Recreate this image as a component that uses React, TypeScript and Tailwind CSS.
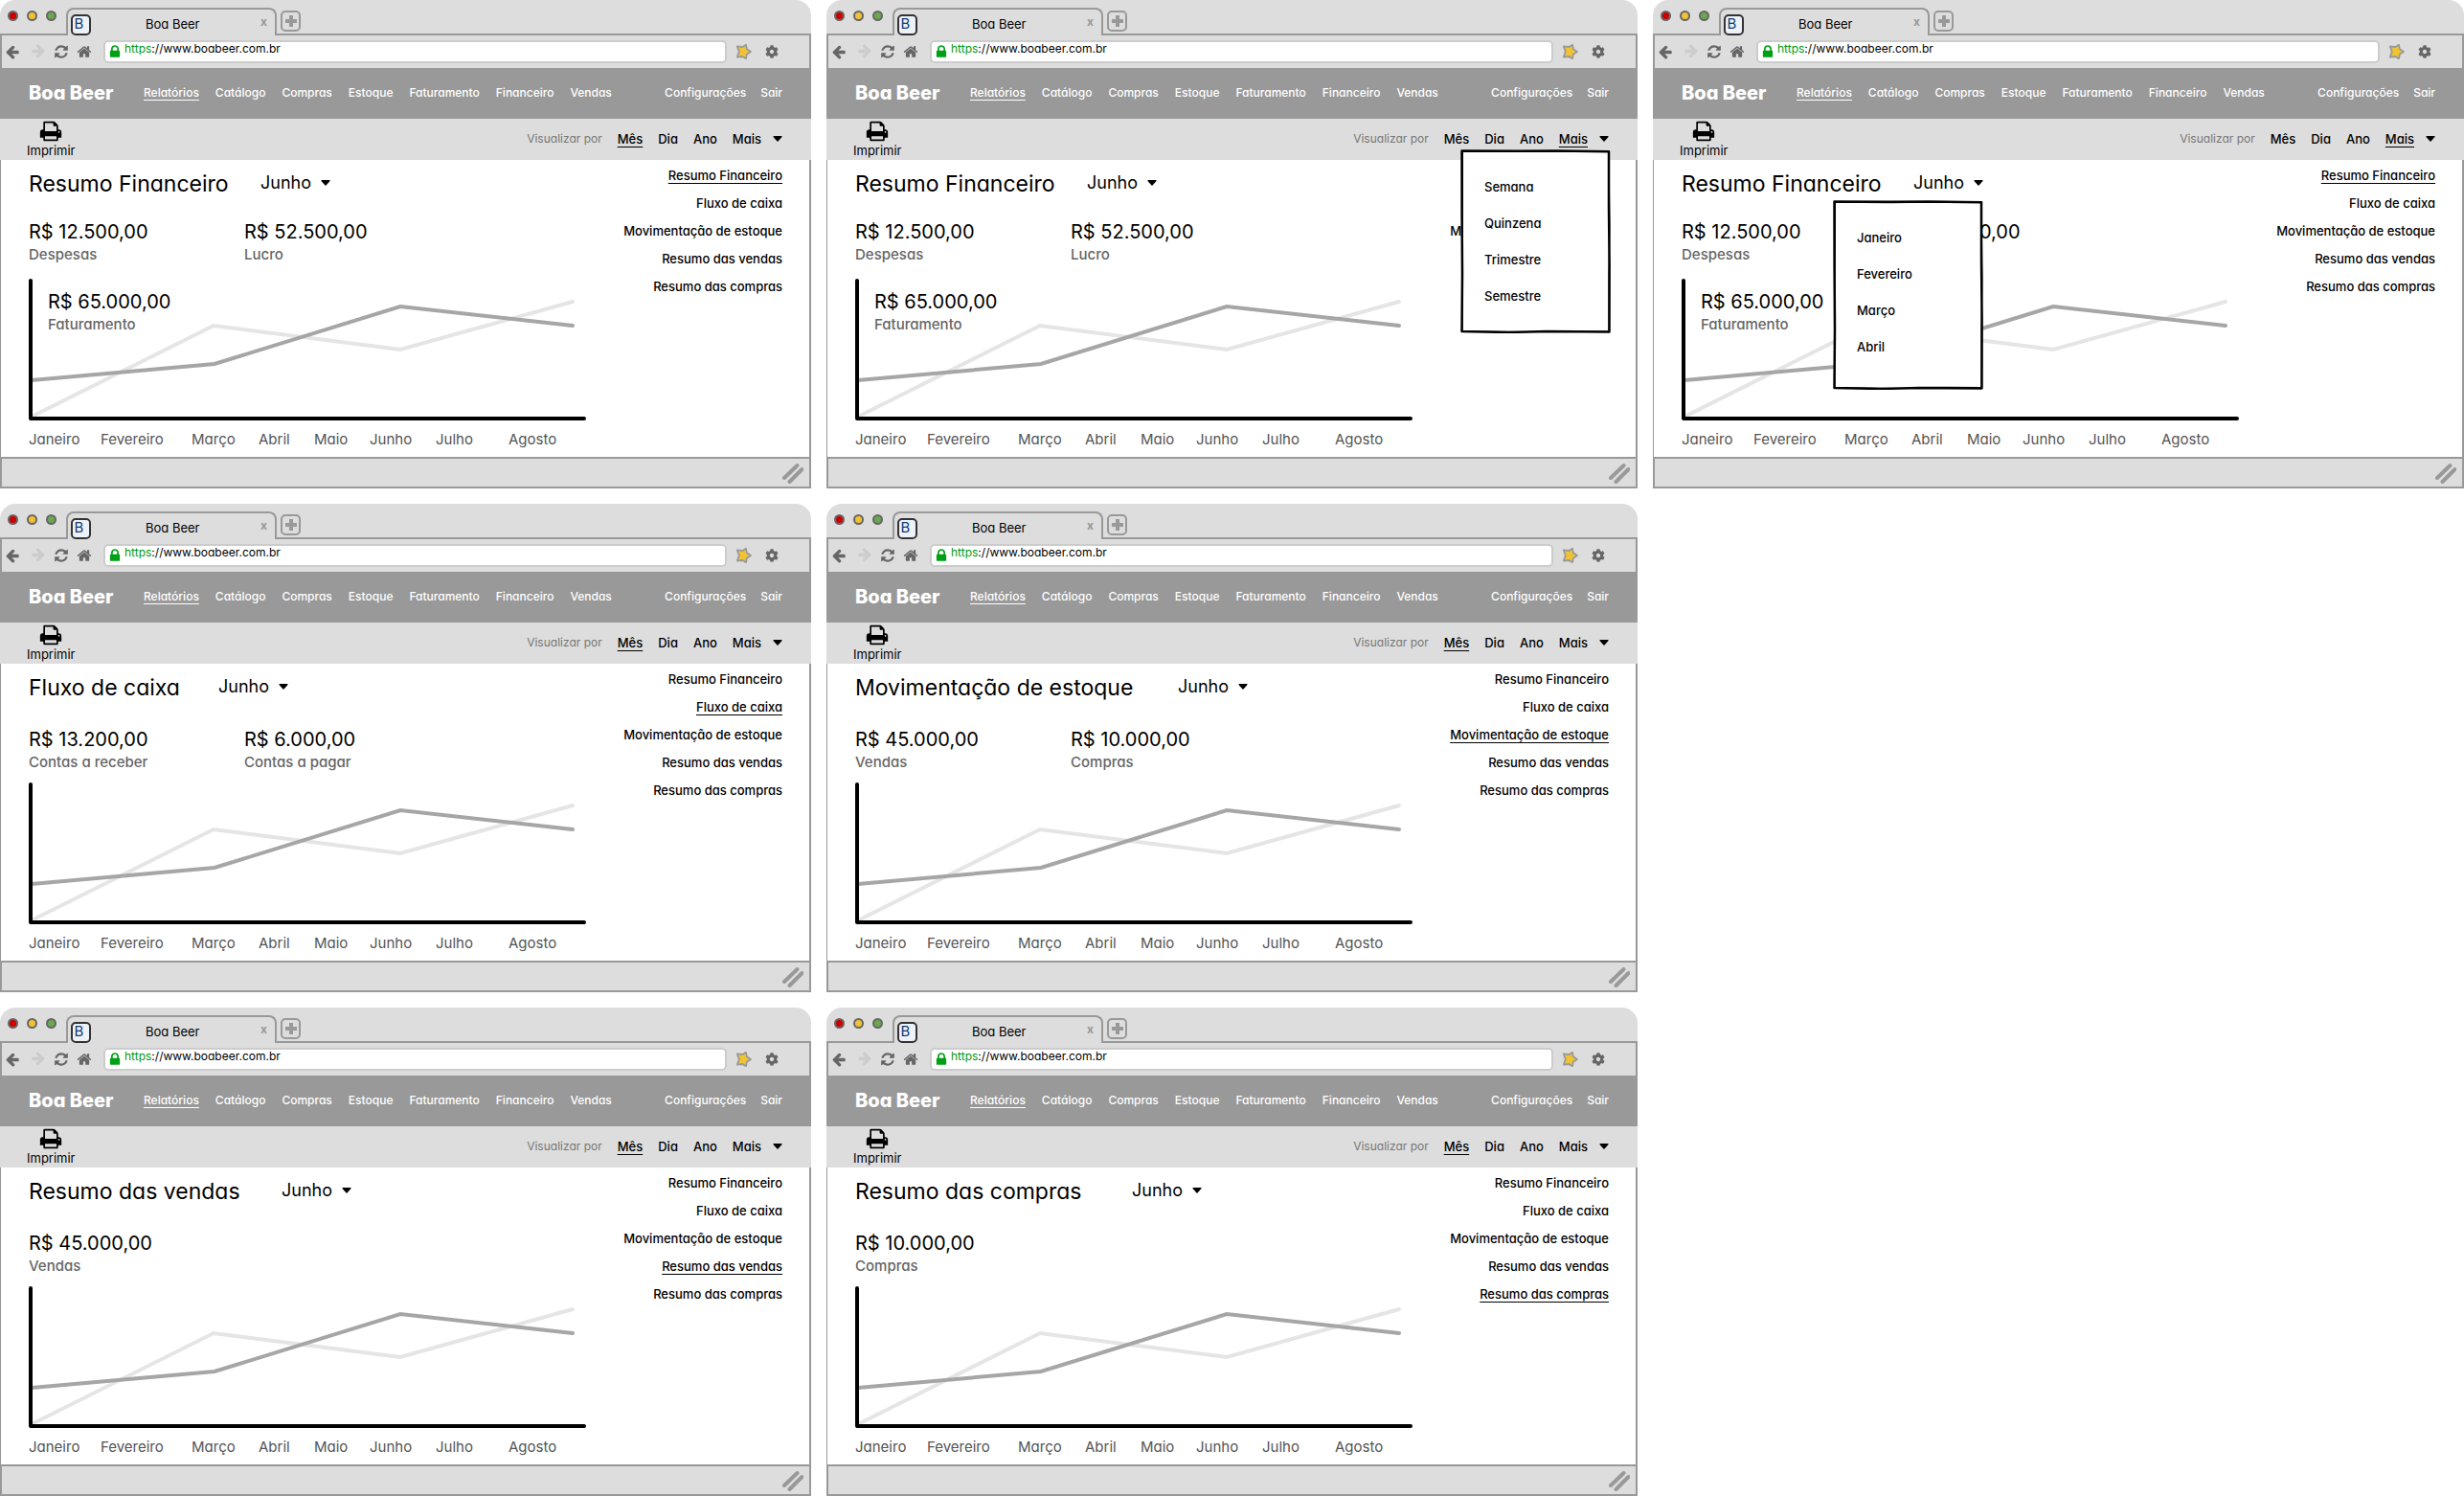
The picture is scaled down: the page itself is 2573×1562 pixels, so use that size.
import React from "react";
import { FaCog } from "react-icons/fa";

type View = {
  title: string;
  titleWidth: string;
  stats: { amount: string; label: string }[];
  tight?: boolean;
  overlay?: { amount: string; label: string };
  period?: string;
  openMenu?: "mais" | "mes";
};

const VIEWS: View[] = [
  {
    title: "Resumo Financeiro",
    titleWidth: "w-[242px]",
    stats: [
      { amount: "R$ 12.500,00", label: "Despesas" },
      { amount: "R$ 52.500,00", label: "Lucro" },
    ],
    tight: true,
    overlay: { amount: "R$ 65.000,00", label: "Faturamento" },
  },
  {
    title: "Resumo Financeiro",
    titleWidth: "w-[242px]",
    stats: [
      { amount: "R$ 12.500,00", label: "Despesas" },
      { amount: "R$ 52.500,00", label: "Lucro" },
    ],
    tight: true,
    overlay: { amount: "R$ 65.000,00", label: "Faturamento" },
    period: "Mais",
    openMenu: "mais",
  },
  {
    title: "Resumo Financeiro",
    titleWidth: "w-[242px]",
    stats: [
      { amount: "R$ 12.500,00", label: "Despesas" },
      { amount: "R$ 52.500,00", label: "Lucro" },
    ],
    tight: true,
    overlay: { amount: "R$ 65.000,00", label: "Faturamento" },
    period: "Mais",
    openMenu: "mes",
  },
  {
    title: "Fluxo de caixa",
    titleWidth: "w-[198px]",
    stats: [
      { amount: "R$ 13.200,00", label: "Contas a receber" },
      { amount: "R$ 6.000,00", label: "Contas a pagar" },
    ],
  },
  {
    title: "Movimentação de estoque",
    titleWidth: "w-[337px]",
    stats: [
      { amount: "R$ 45.000,00", label: "Vendas" },
      { amount: "R$ 10.000,00", label: "Compras" },
    ],
  },
  {
    title: "Resumo das vendas",
    titleWidth: "w-[264px]",
    stats: [{ amount: "R$ 45.000,00", label: "Vendas" }],
  },
  {
    title: "Resumo das compras",
    titleWidth: "w-[289px]",
    stats: [{ amount: "R$ 10.000,00", label: "Compras" }],
  },
];

const NAV = ["Relatórios", "Catálogo", "Compras", "Estoque", "Faturamento", "Financeiro", "Vendas"];
const REPORTS = ["Resumo Financeiro", "Fluxo de caixa", "Movimentação de estoque", "Resumo das vendas", "Resumo das compras"];
const MONTHS = ["Janeiro", "Fevereiro", "Março", "Abril", "Maio", "Junho", "Julho", "Agosto"];
const UNDERLINE = "underline decoration-1 underline-offset-[3px] [text-decoration-skip-ink:none]";

function Glyph({ d, className }: { d: string; className: string }) {
  return (
    <svg viewBox="0 0 1792 1792" className={className} fill="currentColor" aria-hidden="true">
      <path d={d} />
    </svg>
  );
}

const ARROW =
  "M1536 896v128q0 53-32.5 90.5t-84.5 37.5H715l293 294q38 36 38 90t-38 90l-75 76q-37 37-90 37-52 0-91-37L101 1051q-37-37-37-90 0-52 37-91l651-650q38-38 91-38 52 0 90 38l75 74q38 38 38 91t-38 91L715 768h704q52 0 84.5 37.5T1536 896z";
const REFRESH =
  "M1639 1056q0 5-1 7-64 268-268 434.5T892 1664q-146 0-282.5-55T366 1452l-129 129q-19 19-45 19t-45-19-19-45v-448q0-26 19-45t45-19h448q26 0 45 19t19 45-19 45l-137 137q71 66 161 102t187 36q134 0 250-65t186-179q11-17 53-117 8-23 30-23h192q13 0 22.5 9.5t9.5 22.5zm25-800v448q0 26-19 45t-45 19h-448q-26 0-45-19t-19-45 19-45l138-138Q1097 384 896 384q-134 0-250 65T460 628q-11 17-53 117-8 23-30 23H178q-13 0-22.5-9.5T146 736v-7q65-268 270-434.5T896 128q146 0 284 55.5T1425 340l130-129q19-19 45-19t45 19 19 45z";
const HOME =
  "M1472 992v480q0 26-19 45t-45 19h-384v-384H768v384H384q-26 0-45-19t-19-45V992q0-1 .5-3t.5-3l575-474 575 474q1 2 1 6zm223-69l-62 74q-8 9-21 11h-3q-13 0-21-7L896 424l-692 577q-12 8-24 7-13-2-21-11l-62-74q-8-10-7-23.5t11-21.5l719-599q32-26 76-26t76 26l244 204V288q0-14 9-23t23-9h192q14 0 23 9t9 23v408l219 182q10 8 11 21.5t-7 23.5z";
const PRINT =
  "M448 1536h896v-256H448v256zm0-640h896V512h-160q-40 0-68-28t-28-68V256H448v640zm1152 64q0-26-19-45t-45-19-45 19-19 45 19 45 45 19 45-19 19-45zm128 0v416q0 13-9.5 22.5t-22.5 9.5h-224v160q0 40-28 68t-68 28H416q-40 0-68-28t-28-68v-160H96q-13 0-22.5-9.5T64 1376V960q0-79 56.5-135.5T256 768h64V224q0-40 28-68t68-28h672q40 0 88 20t76 48l152 152q28 28 48 76t20 88v256h64q79 0 135.5 56.5T1728 960z";
const LOCK =
  "M640 768h512V576q0-106-75-181t-181-75-181 75-75 181v192zm832 96v576q0 40-28 68t-68 28H416q-40 0-68-28t-28-68V864q0-40 28-68t68-28h32V576q0-184 132-316t316-132 316 132 132 316v192h32q40 0 68 28t28 68z";

function Caret() {
  return (
    <svg viewBox="0 0 10 6" className="h-1.5 w-2.5" aria-hidden="true">
      <path d="M1 0h8q1 .3.5 1L5.500 5.500q-.5.500-1 0L.5 1Q0 .3 1 0z" />
    </svg>
  );
}

function SketchMenu({ label, items, className }: { label: string; items: string[]; className: string }) {
  return (
    <div className={`absolute z-10 w-[157px] ${className}`}>
      <svg viewBox="0 0 157 192" preserveAspectRatio="none" className="absolute inset-0 h-full w-full" aria-hidden="true">
        <path d="M1.500 1.500 60 1.800 100 1.400 155 2.200 155 60 155.600 120 155.500 190.400 90 190 50 191 1.500 190 2 130 1.600 70z" fill="#fff" stroke="#000" strokeWidth="2.500" strokeLinejoin="round" />
        <path d="M2.500 2.200 155 1.500 156 80 155 130 155 190 70 190.600 2 189.800 1.800 120 2.400 50z" fill="none" stroke="#000" strokeWidth="1" />
      </svg>
      <ul role="menu" aria-label={label} className="relative flex flex-col gap-[18px] pl-[25px]">
        {items.map((item) => (
          <li key={item} role="none" className="flex">
            <button role="menuitem" className="text-[13px] leading-5 font-medium">{item}</button>
          </li>
        ))}
      </ul>
    </div>
  );
}

function BrowserTop({ id }: { id: string }) {
  return (
    <>
      <div className="flex h-[37px] items-start rounded-t-2xl border-b-2 border-[#999] bg-[#ddd] pl-2">
        <div className="flex gap-[9px] pt-[11px]">
          <span className="size-[11px] rounded-full border-2 border-[#666] bg-[#c00]" />
          <span className="size-[11px] rounded-full border-2 border-[#666] bg-[#f1c232]" />
          <span className="size-[11px] rounded-full border-2 border-[#666] bg-[#6aa84f]" />
        </div>
        <div className="mt-2 ml-[10px] flex h-[29px] w-[220px] items-start rounded-t-lg border-2 border-b-0 border-[#999] bg-[#ddd] pt-[5px] pr-2 pl-[3px]">
          <span className="flex h-[22px] w-[21px] justify-center rounded-[5px] border-2 border-[#333] bg-[#eef2f8] pr-1 text-[15px] leading-4 text-[#0b3c78]">B</span>
          <span className="ml-[57px] text-[13px] leading-5">Boa Beer</span>
          <button aria-label="Fechar aba" className="ml-auto text-xs leading-4 font-bold text-[#999]">x</button>
        </div>
        <button aria-label="Nova aba" className="mt-[11px] ml-1 flex h-[22px] w-[21px] items-center justify-center rounded-[5px] border-2 border-[#999]">
          <svg viewBox="0 0 14 14" className="size-3.5" aria-hidden="true">
            <path d="M7 1v12M1 7h12" stroke="#999" strokeWidth="4" />
          </svg>
        </button>
      </div>
      <div className="flex h-[34px] items-center border-x-2 border-[#999] bg-[#ddd] pr-8 pl-1 text-[#666]">
        <button aria-label="Voltar"><Glyph d={ARROW} className="size-4" /></button>
        <button aria-label="Avançar" className="ml-[9px] text-[#ccc]"><Glyph d={ARROW} className="size-4 rotate-180" /></button>
        <button aria-label="Recarregar" className="ml-[9px]"><Glyph d={REFRESH} className="size-4" /></button>
        <button aria-label="Início" className="ml-2"><Glyph d={HOME} className="size-4" /></button>
        <div className="ml-3 flex h-6 flex-1 items-center rounded-[5px] border-2 border-[#ccc] bg-white pl-0.5">
          <Glyph d={LOCK} className="size-4 text-[#00a014]" />
          <label htmlFor={id} className="mb-1.5 ml-0.5 text-xs leading-4 text-[#009910]">https</label>
          <input id={id} defaultValue="://www.boabeer.com.br" className="mb-1.5 min-w-0 flex-1 bg-transparent text-xs leading-4 text-black outline-none" />
        </div>
        <button aria-label="Favoritar" className="ml-2">
          <svg viewBox="0 0 20 20" className="size-5" aria-hidden="true">
            <path d="M17 10 12.800 12.800 12 17.200 8.400 15 2.800 15.600 4.800 10 2.800 4.400 8.400 5 12 2.800 12.800 7.200z" fill="#f1c232" stroke="#999" strokeWidth="1.800" strokeLinejoin="round" />
          </svg>
        </button>
        <button aria-label="Configurar navegador" className="ml-3"><FaCog className="size-3.5" /></button>
      </div>
    </>
  );
}

function MonthPicker({ open, id }: { open: boolean; id: string }) {
  if (open) {
    return (
      <div className="relative">
        <button aria-haspopup="menu" aria-expanded="true" className="flex h-[26px] w-[73px] items-center justify-between text-lg leading-[26px]">
          Junho
          <Caret />
        </button>
        <SketchMenu label="Mês" items={MONTHS.slice(0, 4)} className="top-[31px] right-0 pt-[29px] pb-[35px]" />
      </div>
    );
  }
  return (
    <div className="relative h-[26px] w-[73px]">
      <select id={id} aria-label="Mês" defaultValue="Junho" className="h-[26px] w-full appearance-none bg-transparent text-lg leading-[26px] outline-none">
        {MONTHS.map((m) => (
          <option key={m}>{m}</option>
        ))}
      </select>
      <span className="pointer-events-none absolute top-0 right-0 flex h-[26px] items-center"><Caret /></span>
    </div>
  );
}

function Chart() {
  return (
    <svg viewBox="0 0 582 148" className="h-[148px] w-[582px] max-w-full" role="img" aria-label="Evolução mensal">
      <polyline points="3,144 193,49 388,74 568,24" fill="none" stroke="#e5e5e5" strokeWidth="4" strokeLinecap="round" />
      <polyline points="3,106 194,89 388,29 568,49" fill="none" stroke="#a6a6a6" strokeWidth="4" strokeLinecap="round" />
      <path d="M2 2v144h578" fill="none" stroke="#000" strokeWidth="4" strokeLinecap="round" strokeLinejoin="round" />
    </svg>
  );
}

function BrowserWindow({ view, index }: { view: View; index: number }) {
  const period = view.period ?? "Mês";
  return (
    <section aria-label={view.title} className="flex min-w-0 flex-col">
      <BrowserTop id={`url-${index}`} />
      <header className="flex h-[53px] items-center bg-[#999] pr-[30px] pb-0.5 pl-[30px] text-white">
        <h1 className="w-[120px] text-xl leading-6 font-extrabold">Boa Beer</h1>
        <nav className="flex flex-1 gap-[17px] text-xs leading-5 font-medium">
          {NAV.map((n) => (
            <a key={n} href="#" className={n === "Relatórios" ? UNDERLINE : ""}>{n}</a>
          ))}
          <a href="#" className="ml-auto">Configurações</a>
          <a href="#" className="-ml-0.5">Sair</a>
        </nav>
      </header>
      <div className="flex h-[43px] items-center bg-[#ddd] pr-[30px] pb-0.5 pl-7">
        <button className="flex flex-col items-center text-[13px] leading-4">
          <Glyph d={PRINT} className="size-6" />
          Imprimir
        </button>
        <div className="ml-auto flex items-center gap-4 text-[13px] leading-5 font-medium">
          <span className="text-xs leading-5 font-normal text-[#777]">Visualizar por</span>
          {["Mês", "Dia", "Ano"].map((p) => (
            <button key={p} className={p === period ? UNDERLINE : ""}>{p}</button>
          ))}
          <div className="relative">
            <button aria-haspopup="menu" aria-expanded={view.openMenu === "mais"} className="flex items-center gap-3">
              <span className={period === "Mais" ? UNDERLINE : ""}>Mais</span>
              <Caret />
            </button>
            {view.openMenu === "mais" && (
              <SketchMenu label="Mais períodos" items={["Semana", "Quinzena", "Trimestre", "Semestre"]} className="top-[21px] -right-0.5 py-[29px]" />
            )}
          </div>
        </div>
      </div>
      <main className="flex justify-between border-r-2 border-l border-[#999] pr-7 pb-1.5 pl-[29px]">
        <div className="pt-[11px]">
          <div className="flex h-7">
            <h2 className={`text-[23px] leading-7 whitespace-nowrap ${view.titleWidth}`}>{view.title}</h2>
            <MonthPicker open={view.openMenu === "mes"} id={`mes-${index}`} />
          </div>
          <dl className={`flex ${view.tight ? "mt-6 mb-[13px]" : "mt-7 mb-[9px]"}`}>
            {view.stats.map((s) => (
              <div key={s.label} className="flex w-[225px] flex-col-reverse">
                <dt className="text-[15px] leading-6 font-medium text-[#666]">{s.label}</dt>
                <dd className="text-xl leading-6">{s.amount}</dd>
              </div>
            ))}
          </dl>
          <div className="relative flex">
            <Chart />
            {view.overlay && (
              <dl className="absolute top-3 left-5 flex flex-col-reverse">
                <dt className="text-[15px] leading-6 font-medium text-[#666]">{view.overlay.label}</dt>
                <dd className="text-xl leading-6">{view.overlay.amount}</dd>
              </dl>
            )}
          </div>
          <ol className="mt-2 grid grid-cols-[75px_95px_70px_58px_58px_69px_76px_60px] text-[15px] leading-6 text-[#555]">
            {MONTHS.map((m) => (
              <li key={m}>{m}</li>
            ))}
          </ol>
        </div>
        <nav aria-label="Relatórios" className="flex flex-col items-end gap-[9px] pt-1.5 text-[13px] leading-5 font-medium">
          {REPORTS.map((r) => (
            <a key={r} href="#" className={`whitespace-nowrap ${r === view.title ? UNDERLINE : ""}`}>{r}</a>
          ))}
        </nav>
      </main>
      <footer className="flex h-[33px] items-center justify-end border-2 border-[#999] bg-[#ddd] pr-1.5">
        <svg viewBox="0 0 22 22" className="size-[22px]" aria-hidden="true">
          <path d="M2 16 15.500 3M7.500 20 20.500 7" stroke="#999" strokeWidth="4" strokeLinecap="round" />
        </svg>
      </footer>
    </section>
  );
}

export default function App() {
  return (
    <div className="grid grid-cols-3 gap-4 bg-white font-['Inter',sans-serif] text-black [font-feature-settings:'cv11']">
      {VIEWS.slice(0, 3).map((v, i) => (
        <BrowserWindow key={i} view={v} index={i} />
      ))}
      {VIEWS.slice(3, 5).map((v, i) => (
        <BrowserWindow key={i} view={v} index={i + 3} />
      ))}
      <div className="col-start-1">
        <BrowserWindow view={VIEWS[5]} index={5} />
      </div>
      <BrowserWindow view={VIEWS[6]} index={6} />
    </div>
  );
}
